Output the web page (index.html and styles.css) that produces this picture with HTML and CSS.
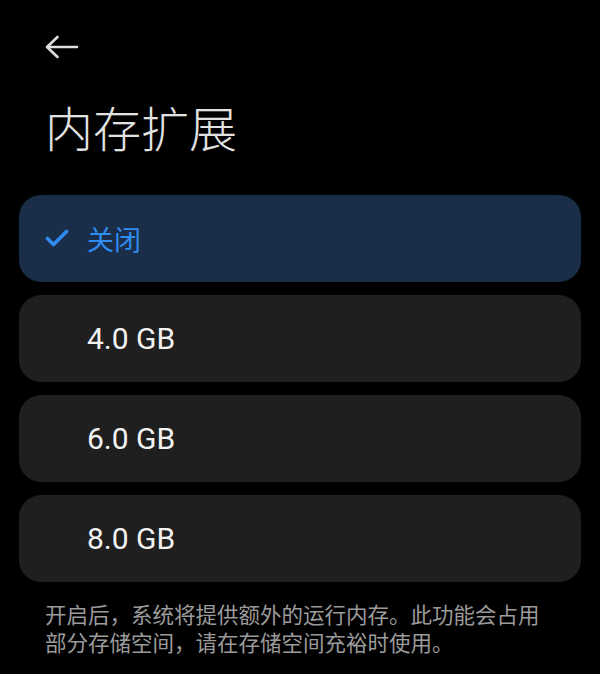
FILE: index.html
```
<!DOCTYPE html>
<html lang="zh-CN">
<head>
<meta charset="utf-8">
<title>内存扩展</title>
<link rel="stylesheet" href="styles.css">
</head>
<body>
<div class="page">
  <div class="topbar">
    <svg class="back" width="34" height="24" viewBox="0 0 34 24" aria-hidden="true">
      <path d="M32 12 H2.5 M12.5 2 L2 12 L12.5 22" fill="none" stroke="#dedede" stroke-width="2.6" stroke-linecap="round" stroke-linejoin="round"/>
    </svg>
  </div>
  <h1 class="title">内存扩展</h1>
  <div class="options">
    <div class="option selected">
      <svg class="check" width="24" height="18" viewBox="0 0 24 18" aria-hidden="true">
        <path d="M2.5 9.5 L8.5 15.5 L21.5 2.5" fill="none" stroke="#2f8cf0" stroke-width="3.6" stroke-linecap="round" stroke-linejoin="round"/>
      </svg>
      <span class="label cjk">关闭</span>
    </div>
    <div class="option"><span class="label">4.0 GB</span></div>
    <div class="option"><span class="label">6.0 GB</span></div>
    <div class="option"><span class="label">8.0 GB</span></div>
  </div>
  <p class="note">开启后，系统将提供额外的运行内存。此功能会占用部分存储空间，请在存储空间充裕时使用。</p>
</div>
</body>
</html>
```
FILE: styles.css
```
html, body {
  margin: 0;
  padding: 0;
  background: #000;
}
body {
  width: 600px;
  height: 674px;
  overflow: hidden;
  font-family: "Noto Sans CJK SC", "Noto Sans", sans-serif;
}
.page {
  display: flex;
  flex-direction: column;
}
.topbar {
  padding: 35px 0 0 45px;
  height: 24px;
}
.back {
  display: block;
}
.title {
  margin: 42px 0 0 45px;
  font-size: 48px;
  line-height: 50px;
  font-weight: 300;
  color: #e2e2e2;
  letter-spacing: 0;
}
.options {
  margin: 44px 19px 0 19px;
  display: flex;
  flex-direction: column;
  gap: 13px;
}
.option {
  position: relative;
  height: 87px;
  border-radius: 22px;
  background: #1f1f1f;
  display: flex;
  align-items: center;
  padding-left: 68px;
}
.option.selected {
  background: #1a2e4a;
}
.check {
  position: absolute;
  left: 26px;
  top: 34px;
}
.label {
  font-family: Roboto, "Noto Sans CJK SC", sans-serif;
  font-size: 30px;
  font-weight: 400;
  color: #f2f2f2;
  line-height: 1;
}
.label.cjk {
  font-family: "Noto Sans CJK SC", sans-serif;
  font-size: 27px;
  font-weight: 400;
  color: #2f8cf0;
}
.note {
  margin: 18px 40px 0 45px;
  font-size: 21.5px;
  line-height: 28px;
  color: #9b9b9b;
}
```
